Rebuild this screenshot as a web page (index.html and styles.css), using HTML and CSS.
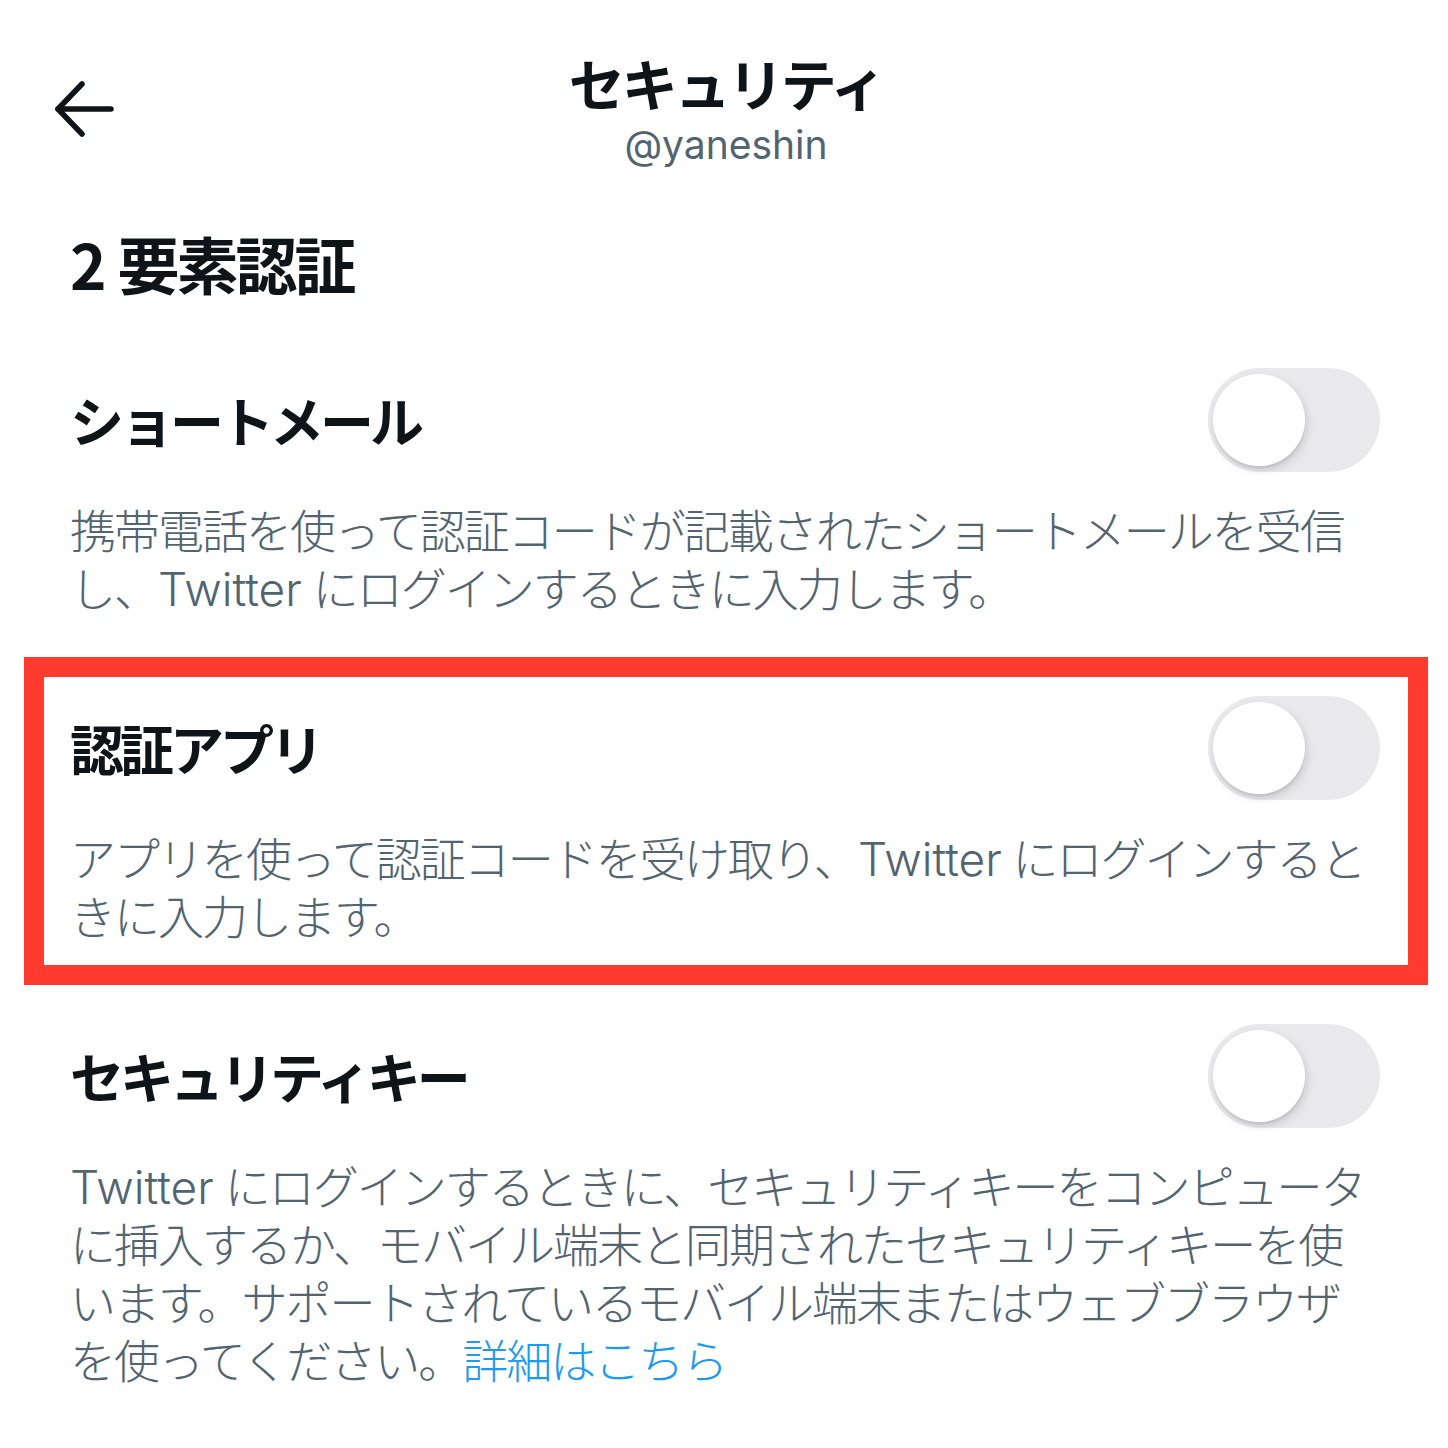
FILE: index.html
```html
<!DOCTYPE html>
<html lang="ja">
<head>
<meta charset="UTF-8">
<title>セキュリティ</title>
<link rel="stylesheet" href="styles.css">
</head>
<body>

    <div class="page">
        <div class="topbar">
            <div class="back">
                <svg width="60" height="56" viewBox="0 0 60 56" fill="none" stroke="#0f1419" stroke-width="5.5" stroke-linecap="round" stroke-linejoin="round">
                    <path d="M4 28 H57" />
                    <path d="M28 3 L4 28 L28 53" />
                </svg>
            </div>
            <div class="title">
                <h1>セキュリティ</h1>
                <p class="handle">@yaneshin</p>
            </div>
            <div></div>
        </div>

        <h2 class="section-title"><span class="num">2</span>要素認証</h2>

        <div class="option">
            <div class="option-head">
                <h3>ショートメール</h3>
                <span class="switch"><span class="knob"></span></span>
            </div>
            <p class="desc">携帯電話を使って認証コードが記載されたショートメールを受信<br>し、<span class="latin">Twitter</span> にログインするときに入力します。</p>
        </div>

        <!-- 赤枠で囲まれた項目 -->
        <div class="option marked">
            <div class="option-head">
                <h3>認証アプリ</h3>
                <span class="switch"><span class="knob"></span></span>
            </div>
            <p class="desc">アプリを使って認証コードを受け取り、<span class="latin">Twitter</span> にログインすると<br>きに入力します。</p>
        </div>

        <div class="option">
            <div class="option-head">
                <h3>セキュリティキー</h3>
                <span class="switch"><span class="knob"></span></span>
            </div>
            <p class="desc"><span class="latin">Twitter</span> にログインするときに、セキュリティキーをコンピュータ<br>に挿入するか、モバイル端末と同期されたセキュリティキーを使<br>います。サポートされているモバイル端末またはウェブブラウザ<br>を使ってください。<a href="#">詳細はこちら</a></p>
        </div>
    </div>

</body>
</html>
```

FILE: styles.css
```css
* {
    box-sizing: border-box;
}

body {
    margin: 0;
    background-color: #fff;
    font-family: Inter, "Noto Sans CJK JP", sans-serif;
    color: #0f1419;
}

.page {
    width: 1448px;
    padding: 50px 20px 0 24px;
}

.topbar {
    display: grid;
    grid-template-columns: 1fr auto 1fr;
    align-items: center;
}

.back {
    padding-left: 30px;
    display: flex;
    align-items: center;
}

.title {
    text-align: center;
}

.title h1 {
    margin: 0;
    font-family: "Noto Sans CJK JP", sans-serif;
    font-size: 56px;
    font-weight: 700;
    letter-spacing: -3px;
    line-height: 64px;
}

.title .handle {
    margin: 8px 0 0;
    font-size: 39px;
    line-height: 46px;
    color: #536471;
}

.section-title {
    margin: 55px 0 0;
    padding: 0 46px;
    font-family: "Noto Sans CJK JP", sans-serif;
    font-size: 62px;
    font-weight: 700;
    letter-spacing: -3px;
    line-height: 80px;
}

.section-title .num {
    margin-right: 14px;
}

.option {
    margin-top: 26px;
    padding: 39px 46px;
}

.option + .option {
    margin-top: 0;
}

.option.marked {
    box-shadow: inset 0 0 0 20px #ff3b30;
}

.option-head {
    display: flex;
    align-items: center;
    justify-content: space-between;
    height: 104px;
}

.option-head h3 {
    margin: 0;
    font-family: "Noto Sans CJK JP", sans-serif;
    font-size: 54px;
    font-weight: 700;
    letter-spacing: -4px;
    line-height: 64px;
}

.switch {
    position: relative;
    width: 172px;
    height: 104px;
    margin-right: 2px;
    border-radius: 52px;
    background-color: #e9e9eb;
}

.switch .knob {
    position: absolute;
    left: 5px;
    top: 6px;
    width: 92px;
    height: 92px;
    border-radius: 50%;
    background-color: #fff;
    box-shadow: 2px 4px 9px rgba(0, 0, 0, 0.14), 0 3px 1px rgba(0, 0, 0, 0.05);
}

.desc {
    margin: 30px 0 0;
    font-size: 46px;
    font-weight: 300;
    letter-spacing: -2px;
    line-height: 58px;
    color: #536471;
    white-space: nowrap;
}

.desc .latin {
    letter-spacing: 0;
}

.desc a {
    color: #1d9bf0;
    text-decoration: none;
}
```
